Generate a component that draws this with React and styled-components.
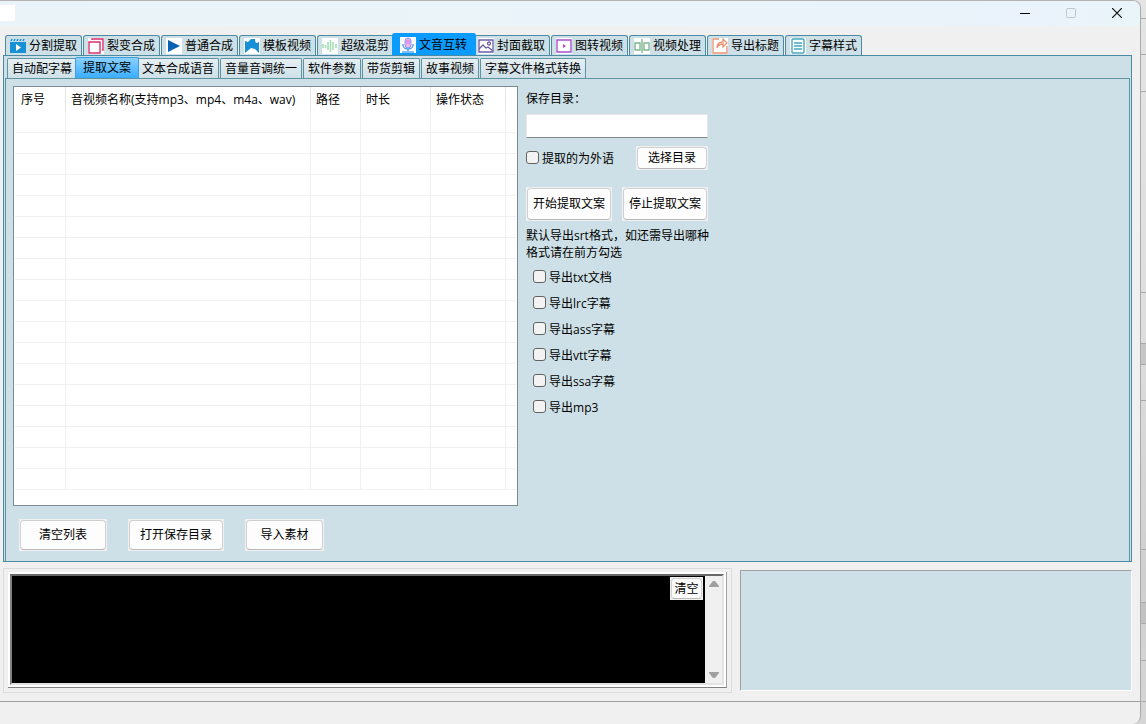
import React from 'react';
import styled, { createGlobalStyle } from 'styled-components';

const GlobalStyle = createGlobalStyle`
  * {
    box-sizing: border-box;
  }

  body {
    margin: 0;
    background: #dcdcdc;
    font-family: "Open Sans", "Noto Sans CJK SC", sans-serif;
    font-size: 12px;
    line-height: 16px;
    color: #000;
  }

  button, input {
    font: inherit;
    color: inherit;
  }
`;

const mainTabs = [
  { name: '分割提取', icon: 'clip' },
  { name: '裂变合成', icon: 'copy' },
  { name: '普通合成', icon: 'play' },
  { name: '模板视频', icon: 'template' },
  { name: '超级混剪', icon: 'wave' },
  { name: '文音互转', icon: 'mic' },
  { name: '封面截取', icon: 'image' },
  { name: '图转视频', icon: 'frame' },
  { name: '视频处理', icon: 'split' },
  { name: '导出标题', icon: 'share' },
  { name: '字幕样式', icon: 'list' },
];

const subTabs = [
  '自动配字幕',
  '提取文案',
  '文本合成语音',
  '音量音调统一',
  '软件参数',
  '带货剪辑',
  '故事视频',
  '字幕文件格式转换',
];

const columns = [
  { name: '序号', width: 51 },
  { name: '音视频名称(支持mp3、mp4、m4a、wav)', width: 245 },
  { name: '路径', width: 50 },
  { name: '时长', width: 70 },
  { name: '操作状态', width: 75 },
];

const exportTypes = ['txt文档', 'lrc字幕', 'ass字幕', 'vtt字幕', 'ssa字幕', 'mp3'];

const rows = Array.from({ length: 18 }, (_, i) => i);

// edges of the windows behind this one
const deskLines = [18, 54, 91, 292, 343, 364, 400, 549, 602, 623, 660, 701]
  .map((y) => `linear-gradient(#aaa, #aaa) 0 ${y}px / 100% 1px no-repeat`)
  .join(', ');

// 16x16 tab icons
const icons = {
  clip: (
    <>
      <path d="M0 4h16v11H0z" fill="#1790d6" />
      <path d="M1 3l1-2M4 3l1-2M7 3l1-2M10 3l1-2M13 3l1-2" stroke="#1790d6" strokeWidth="1.5" />
      <path d="M6 6l5 3.500-5 3.500z" fill="#fff" />
    </>
  ),
  copy: (
    <g fill="none" stroke="#d9306f">
      <path d="M1 4h11v11H1z" strokeWidth="1.4" />
      <path d="M4 2V1h11v11h-1" strokeWidth="1.4" />
    </g>
  ),
  play: <path d="M2 2l12 6-12 6z" fill="#0a62b4" />,
  template: (
    <path
      d="M1 3l3 1 3-3v9l-6 5zM7 1h4c0 3 1 4 2 4l2-1v11l-4-4-4-1z"
      fill="#1790d6"
    />
  ),
  wave: (
    <path
      d="M1 6v4M3.500 7v3M6 4v8M8.500 2v12M11 4v8M14 6v4"
      stroke="#9fdcb0"
      strokeWidth="1.500"
    />
  ),
  mic: (
    <>
      <path d="M5 4a3 3 0 0 1 6 0v4a3 3 0 0 1-6 0z" fill="#e8b4ee" stroke="#8b95ee" />
      <path d="M6 4h4M6 6h4" stroke="#d57be0" />
      <path d="M3 7v1a5 4 0 0 0 10 0V7M8 12v2M2 15h12" fill="none" stroke="#59a9e6" strokeWidth="1.500" />
    </>
  ),
  image: (
    <g fill="none" stroke="#6b5ca5" strokeWidth="1.300">
      <path d="M1 2h14v12H1z" />
      <path d="M1 11l4-4 3 3 2-1 5 4" />
      <circle cx="11" cy="5.500" r="1.500" />
    </g>
  ),
  frame: (
    <>
      <path d="M1 2h14v12H1z" fill="none" stroke="#a94fd0" strokeWidth="1.400" />
      <path d="M7 6l3 2-3 2z" fill="#c03cc0" />
    </>
  ),
  split: (
    <g fill="none" stroke="#7fb592" strokeWidth="1.400">
      <path d="M6 5H1v7h5zM10 5h5v7h-5zM8 1v14" />
    </g>
  ),
  share: (
    <g fill="none" stroke="#eb9272" strokeWidth="1.300">
      <path d="M7 1H1v14h14V8" />
      <path d="M5 10c0-4 2-6 6-6V1l4 4-4 4V6c-3 0-5 1-6 4z" />
    </g>
  ),
  list: (
    <g fill="none" stroke="#44a9be" strokeWidth="1.400">
      <rect x="2" y="1" width="12" height="14" rx="1" />
      <path d="M4 5h8M4 8h8M4 11h8" />
    </g>
  ),
};

function PushButton({ width, height, children }) {
  return (
    <Button $width={width} $height={height}>
      <ButtonFace>{children}</ButtonFace>
    </Button>
  );
}

function App() {
  return (
    <Desktop>
      <GlobalStyle />
      <Window>
        <TitleBar>
          <Logo />
          <WindowButton aria-label="Minimize">
            <svg width="10" height="10"><path d="M0 5.500h10" stroke="#000" /></svg>
          </WindowButton>
          <WindowButton aria-label="Maximize" disabled>
            <svg width="10" height="10">
              <rect x=".5" y=".5" width="9" height="9" rx="1" fill="none" stroke="#bfc5c8" />
            </svg>
          </WindowButton>
          <WindowButton aria-label="Close">
            <svg width="10" height="10"><path d="M0 0l10 10M10 0L0 10" stroke="#111" strokeWidth="1.200" /></svg>
          </WindowButton>
        </TitleBar>

        <Main>
          <MainTabs>
            {mainTabs.map((tab) => (
              <MainTab key={tab.name} $active={tab.name === '文音互转'}>
                <TabIcon viewBox="0 0 16 16" $plain={tab.icon === 'clip'}>
                  {icons[tab.icon]}
                </TabIcon>
                {tab.name}
              </MainTab>
            ))}
          </MainTabs>
          <Panel>
            <SubTabs>
              {subTabs.map((name) => (
                <SubTab key={name} $active={name === '提取文案'}>{name}</SubTab>
              ))}
            </SubTabs>
            <Page>
              <FileSide>
                <ListBox>
                  <Table>
                    <colgroup>
                      {columns.map((col) => <Col key={col.name} $width={col.width} />)}
                      <col />
                    </colgroup>
                    <thead>
                      <tr>
                        {columns.map((col) => <Th key={col.name}>{col.name}</Th>)}
                        <td />
                      </tr>
                    </thead>
                    <tbody>
                      {rows.map((row) => (
                        <tr key={row}>
                          {columns.map((col) => <Td key={col.name} />)}
                          <Td $last />
                        </tr>
                      ))}
                    </tbody>
                  </Table>
                </ListBox>
                <Actions>
                  <PushButton width={88} height={32}>清空列表</PushButton>
                  <PushButton width={96} height={32}>打开保存目录</PushButton>
                  <PushButton width={79} height={32}>导入素材</PushButton>
                </Actions>
              </FileSide>

              <Options>
                <label htmlFor="saveDir">保存目录：</label>
                <PathInput id="saveDir" type="text" />
                <OptionRow>
                  <Check>
                    <CheckBox type="checkbox" />
                    提取的为外语
                  </Check>
                  <PushButton width={72} height={24}>选择目录</PushButton>
                </OptionRow>
                <RunRow>
                  <PushButton width={86} height={34}>开始提取文案</PushButton>
                  <PushButton width={86} height={34}>停止提取文案</PushButton>
                </RunRow>
                <Hint>默认导出srt格式，如还需导出哪种<br />格式请在前方勾选</Hint>
                <ExportList>
                  {exportTypes.map((type) => (
                    <Check key={type}>
                      <CheckBox type="checkbox" />
                      导出{type}
                    </Check>
                  ))}
                </ExportList>
              </Options>
            </Page>
          </Panel>
        </Main>

        <Bottom>
          <LogFrame>
            <LogBox>
              <LogInner>
                <Console>
                  <PushButton width={33} height={23}>清空</PushButton>
                </Console>
                <ScrollBar>
                  <svg width="10" height="7"><path d="M4 0h2l4 5v1H0V5z" fill="#a0a0a0" /></svg>
                  <svg width="10" height="7"><path d="M4 7h2l4-5V1H0v1z" fill="#a0a0a0" /></svg>
                </ScrollBar>
              </LogInner>
            </LogBox>
          </LogFrame>
          <Preview />
        </Bottom>
        <StatusBar />
      </Window>
    </Desktop>
  );
}

export default App;


const Desktop = styled.div`
  min-height: 100vh;
  display: flex;
  padding-right: 5px;
  background:
    ${deskLines},
    linear-gradient(#c6c6c6, #c6c6c6) 0 343px / 100% 21px no-repeat,
    linear-gradient(#c2c2c2, #c2c2c2) 0 602px / 100% 21px no-repeat,
    linear-gradient(#e4e4e4, #dedede 45%, #cfcfcf 80%, #d6d6d6);
`;

const Window = styled.div`
  flex: 1;
  min-width: 0;
  display: flex;
  flex-direction: column;
  background: #f0f0f0;
  border-top: 1px solid #b3b3b3;
  border-right: 1px solid #aaa;
  border-radius: 0 8px 8px 0;
  overflow: hidden;
`;

const TitleBar = styled.header`
  height: 25px;
  padding-bottom: 1px;
  display: flex;
  align-items: center;
  background: linear-gradient(90deg, #eaf4f8, #e9f3f9 80%, #eaf2fb 90%, #e9f5f8);
`;

const Logo = styled.div`
  width: 15px;
  height: 16px;
  margin-right: auto;
  background: #fff;
`;

const WindowButton = styled.button`
  width: 46px;
  height: 24px;
  padding: 0;
  border: none;
  background: none;
  display: flex;
  align-items: center;
  justify-content: center;
`;

const Main = styled.main`
  padding: 7px 8px 0 3px;
`;

const MainTabs = styled.nav`
  display: flex;
  align-items: flex-end;
  gap: 1px;
  height: 22px;
  padding-left: 2px;
`;

const MainTab = styled.button`
  display: flex;
  align-items: center;
  gap: 3px;
  width: ${(props) => (props.$active ? '84px' : '77px')};
  height: ${(props) => (props.$active ? '22px' : '20px')};
  margin: ${(props) => (props.$active ? '0 -4px 0 -3px' : '0')};
  padding: 0 0 0 ${(props) => (props.$active ? '7px' : '4px')};
  border: 1px solid ${(props) => (props.$active ? '#0a9bff' : '#4b8aa3')};
  border-bottom: none;
  border-radius: 3px 3px 0 0;
  background: ${(props) => (props.$active ? '#0a9bff' : '#cee0e7')};
  position: relative;
  z-index: ${(props) => (props.$active ? 1 : 0)};
  white-space: nowrap;
`;

const TabIcon = styled.svg`
  width: 16px;
  height: 16px;
  flex: none;
  background: ${(props) => (props.$plain ? 'none' : '#fff')};
`;

const Panel = styled.section`
  padding: 1px 1px 0;
  border: 1px solid #4b8aa3;
  background: #cee0e7;
`;

const SubTabs = styled.nav`
  display: flex;
  align-items: flex-end;
  gap: 1px;
  height: 21px;
  padding-left: 2px;
`;

const SubTab = styled.button` //second level tab
  height: ${(props) => (props.$active ? '21px' : '20px')};
  margin: ${(props) => (props.$active ? '0 -3px' : '0')};
  padding: 0 ${(props) => (props.$active ? '7px' : '4px')};
  border: 1px solid ${(props) => (props.$active ? '#3d9fdc' : '#5f939f')};
  border-bottom: none;
  border-radius: 2px 2px 0 0;
  background: ${(props) => (props.$active
    ? 'linear-gradient(#8bd0ff, #39adff)'
    : 'linear-gradient(#e6eff3, #cee0e7)')};
  position: relative;
  z-index: ${(props) => (props.$active ? 1 : 0)};
  white-space: nowrap;
`;

const Page = styled.div`
  display: flex;
  gap: 8px;
  padding: 7px;
  border: 1px solid #5f939f;
  border-bottom: none;
`;

const FileSide = styled.div`
  width: 505px;
`;

const ListBox = styled.div`
  height: 420px;
  padding: 0 1px 2px;
  border: 1px solid #7c8a92;
  background: #fff;
  overflow: hidden;
`;

const Table = styled.table`
  width: 100%;
  table-layout: fixed;
  border-collapse: separate;
  border-spacing: 0;
`;

const Col = styled.col`
  width: ${(props) => props.$width}px;
`;

const Th = styled.th`
  height: 25px;
  padding: 1px 0 0 5px;
  border-right: 1px solid #e5e5e5;
  font-weight: normal;
  text-align: left;
  white-space: nowrap;

  &:first-child {
    padding-left: 6px;
  }
`;

const Td = styled.td`
  height: 21px;
  padding: 0;
  border-bottom: 1px solid #f0f0f0;
  border-right: ${(props) => (props.$last ? 'none' : '1px solid #f0f0f0')};
`;

const Actions = styled.div`
  display: flex;
  gap: 21px;
  padding: 13px 6px 3px;
`;

const Button = styled.button`
  display: flex;
  width: ${(props) => props.$width}px;
  height: ${(props) => props.$height}px;
  padding: 1px;
  border: none;
  background: #f0f0f0;
`;

const ButtonFace = styled.span`
  flex: 1;
  align-self: stretch;
  display: flex;
  align-items: center;
  justify-content: center;
  border: 1px solid #d0d0d0;
  border-bottom-color: #b8b8b8;
  border-radius: 4px;
  background: #fdfdfd;
  white-space: nowrap;
`;

const Options = styled.div`
  width: 184px;
  padding-top: 5px;
  display: flex;
  flex-direction: column;
`;

const PathInput = styled.input`
  width: 182px;
  height: 24px;
  margin-top: 7px;
  padding: 0 4px;
  border: 1px solid #e6e6e6;
  border-bottom-color: #868686;
  background: #fff;
`;

const OptionRow = styled.div`
  display: flex;
  align-items: center;
  justify-content: space-between;
  width: 182px;
  margin-top: 8px;
`;

const RunRow = styled.div`
  display: flex;
  justify-content: space-between;
  width: 182px;
  margin-top: 17px;
`;

const Check = styled.label`
  display: flex;
  align-items: flex-start;
  gap: 3px;
  padding-top: 2px;
  white-space: nowrap;
`;

const CheckBox = styled.input`
  appearance: none;
  width: 13px;
  height: 13px;
  margin: 0;
  border: 1px solid #626262;
  border-radius: 3px;
  background: #f3f3f3;

  &:checked {
    background: #0067c0;
  }
`;

const Hint = styled.p`
  margin: 6px 0 0;
  line-height: 17px;
  white-space: nowrap;
`;

const ExportList = styled.div`
  display: flex;
  flex-direction: column;
  gap: 8px;
  padding: 7px 0 0 7px;
`;

const Bottom = styled.div`
  display: grid;
  grid-template-columns: 729fr 392fr;
  gap: 8px;
  padding: 6px 8px 0 3px;
`;

const LogFrame = styled.section`
  padding: 3px 4px 4px;
  border: 1px solid #dcdcdc;
`;

const LogBox = styled.div`
  padding: 2px;
  border-right: 1px solid #a0a0a0;
  border-bottom: 1px solid #808080;
  background: #fff;
`;

const LogInner = styled.div`
  display: flex;
  height: 111px;
  border: 2px solid #e3e3e3;
  border-top-color: #696969;
  border-left-color: #808080;
  background: #f0f0f0;
`;

const Console = styled.div`
  flex: 1;
  display: flex;
  justify-content: flex-end;
  align-items: flex-start;
  padding: 1px 2px;
  background: #000;
`;

const ScrollBar = styled.div`
  width: 17px;
  display: flex;
  flex-direction: column;
  align-items: center;
  justify-content: space-between;
  padding: 5px 0;
`;

const Preview = styled.section`
  height: 121px;
  margin-top: 2px;
  border: 1px solid #fff;
  border-top-color: #a0a0a0;
  border-left-color: #a0a0a0;
  background: #cee0e7;
`;

const StatusBar = styled.footer`
  flex: 1;
  min-height: 22px;
  margin-top: 8px;
  border-top: 1px solid #a0a0a0;
`;
